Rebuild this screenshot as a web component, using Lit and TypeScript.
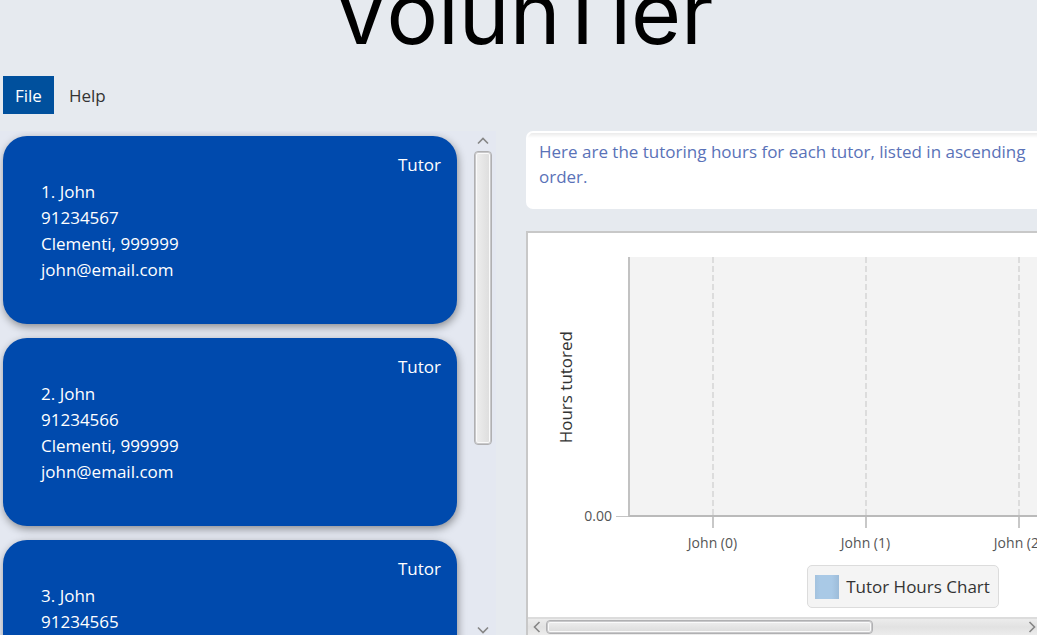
import { LitElement, html, css } from "lit";
import { customElement, property } from "lit/decorators.js";

interface Tutor {
  index: number;
  name: string;
  phone: string;
  address: string;
  email: string;
}

const TUTORS: Tutor[] = [
  { index: 1, name: "John", phone: "91234567", address: "Clementi, 999999", email: "john@email.com" },
  { index: 2, name: "John", phone: "91234566", address: "Clementi, 999999", email: "john@email.com" },
  { index: 3, name: "John", phone: "91234565", address: "Clementi, 999999", email: "john@email.com" },
];

@customElement("tutor-card")
class TutorCard extends LitElement {
  @property({ attribute: false }) tutor!: Tutor;

  static styles = css`
    :host {
      display: block;
      flex: none;
    }
    .card {
      box-sizing: border-box;
      min-height: 188px;
      padding: 16px 16px 40px 38px;
      border-radius: 24px;
      background: #004aad;
      color: #fff;
      line-height: 26px;
      box-shadow: 1px 3px 8px rgba(0, 0, 0, 0.4);
      display: flex;
      flex-direction: column;
      gap: 1px;
    }
    .role {
      align-self: flex-end;
    }
    .details {
      margin: 0;
      padding: 0;
      list-style: none;
    }
  `;

  render() {
    const t = this.tutor;
    return html`<article class="card">
      <span class="role">Tutor</span>
      <ul class="details">
        <li>${t.index}. ${t.name}</li>
        <li>${t.phone}</li>
        <li>${t.address}</li>
        <li>${t.email}</li>
      </ul>
    </article>`;
  }
}

@customElement("hours-chart")
class HoursChart extends LitElement {
  @property({ attribute: false }) labels: string[] = [];

  static styles = css`
    :host {
      display: flex;
      min-width: 750px;
      box-sizing: border-box;
    }
    .chart {
      flex: 1;
      display: flex;
      flex-direction: column;
      padding: 24px 26px 9px 26px;
    }
    .area {
      flex: 1;
      display: grid;
      grid-template-columns: 24px 50px 1fr;
      grid-template-rows: 1fr 48px;
    }
    .y-title {
      writing-mode: vertical-rl;
      transform: rotate(180deg);
      place-self: center;
      line-height: 24px;
      color: #333;
    }
    .y-axis {
      display: flex;
      align-items: flex-end;
      justify-content: flex-end;
      gap: 4px;
      font-size: 14px;
      line-height: 20px;
      color: #555;
    }
    .y-value {
      margin-bottom: -9px;
    }
    .y-tick {
      width: 12px;
      height: 1px;
      background: #c4c4c4;
    }
    .plot {
      background: #f3f3f3;
      border-left: 2px solid #c2c2c2;
      border-bottom: 2px solid #bababa;
      padding-left: 6px;
      display: flex;
    }
    .column {
      width: 153px;
      display: flex;
      justify-content: center;
    }
    .grid-line {
      width: 2px;
      background: repeating-linear-gradient(to bottom, #dcdcdc 0 6px, transparent 6px 9px);
    }
    .x-axis {
      grid-column: 3;
      padding-left: 8px;
      display: flex;
    }
    .category {
      width: 153px;
      display: flex;
      flex-direction: column;
      align-items: center;
      font-size: 14px;
      line-height: 20px;
      color: #555;
      gap: 5px;
    }
    .x-tick {
      width: 2px;
      height: 11px;
      background: #c8c8c8;
    }
    .legend {
      align-self: center;
      display: flex;
      align-items: center;
      gap: 7px;
      box-sizing: border-box;
      height: 43px;
      padding: 0 8px 0 7px;
      border: 1px solid #dcdcdc;
      border-radius: 5px;
      background: #f4f4f4;
      color: #333;
    }
    .swatch {
      width: 24px;
      height: 24px;
      background: linear-gradient(to right, #a3c2de, #a9c9e6 20%, #a9c9e6 70%, #9dbcd9);
    }
  `;

  render() {
    return html`<div class="chart">
      <div class="area">
        <span class="y-title">Hours tutored</span>
        <div class="y-axis"><span class="y-value">0.00</span><span class="y-tick"></span></div>
        <div class="plot">
          ${this.labels.map(() => html`<div class="column"><span class="grid-line"></span></div>`)}
        </div>
        <div class="x-axis">
          ${this.labels.map((l) => html`<div class="category"><span class="x-tick"></span><span>${l}</span></div>`)}
        </div>
      </div>
      <div class="legend"><span class="swatch"></span><span>Tutor Hours Chart</span></div>
    </div>`;
  }
}

@customElement("app-root")
class AppRoot extends LitElement {
  static styles = css`
    :host {
      display: flex;
      flex-direction: column;
      height: 100vh;
      overflow: hidden;
      background: #e6eaef;
      font-family: "Open Sans", "Noto Sans", sans-serif;
      font-size: 17px;
      font-weight: 400;
    }
    .header {
      height: 76px;
      display: flex;
      justify-content: center;
      align-items: flex-end;
    }
    .title {
      margin: 0;
      padding-left: 8px;
      font-family: Inter, sans-serif;
      font-size: 86px;
      font-weight: 400;
      line-height: 126px;
      color: #000;
    }
    .menu {
      display: flex;
      gap: 3px;
      padding: 0 3px;
    }
    .menu-item {
      height: 38px;
      padding: 0 12px;
      border: 0;
      background: none;
      font: inherit;
      color: #333;
    }
    .menu-item.active {
      background: #00509d;
      color: #fff;
    }
    .main {
      flex: 1;
      min-height: 0;
      display: grid;
      grid-template-columns: 496fr 511fr;
      gap: 30px;
      padding-top: 17px;
    }
    .people {
      display: flex;
      min-height: 0;
      overflow: hidden;
      background: #e4e8f1;
    }
    .list {
      flex: 1;
      min-width: 0;
      display: flex;
      flex-direction: column;
      gap: 14px;
      padding: 5px 17px 0 3px;
    }
    .scroll {
      border: 0;
      padding: 0;
      background: none;
      display: flex;
      align-items: center;
      justify-content: center;
    }
    .arrow {
      fill: none;
      stroke: #868686;
      stroke-width: 1.6;
    }
    .bar-y {
      width: 18px;
      margin-right: 4px;
      display: flex;
      flex-direction: column;
    }
    .bar-y .scroll {
      height: 20px;
    }
    .bar-y .scroll:last-child {
      height: 10px;
    }
    .track {
      flex: 1;
      min-width: 0;
      min-height: 0;
    }
    .thumb {
      box-sizing: border-box;
      border: 1px solid #b0b0b2;
      border-radius: 4px;
      box-shadow: inset 0 0 0 1px #c8c8ca, inset 0 0 0 2px #fafafa;
    }
    .thumb-y {
      height: 62%;
      background: linear-gradient(to right, #efefef, #dcdcdc);
    }
    .thumb-x {
      width: 68%;
      height: 14px;
      background: linear-gradient(to bottom, #efefef, #dadada);
    }
    .side {
      min-width: 0;
      min-height: 0;
      display: flex;
      flex-direction: column;
      gap: 22px;
    }
    .result {
      box-sizing: border-box;
      height: 78px;
      padding: 6px 8px 0 11px;
      border: 2px solid #fff;
      border-right: 0;
      border-radius: 7px 0 0 7px;
      background: linear-gradient(to bottom, #ebebeb, #fff 5px);
      font: inherit;
      line-height: 25px;
      color: #5a72b8;
      resize: none;
      outline: 0;
      overflow: hidden;
    }
    .panel {
      flex: 1;
      min-height: 0;
      display: flex;
      flex-direction: column;
      border: 2px solid #c8c8c8;
      border-width: 2px 0 0 2px;
      background: #fff;
    }
    .view {
      flex: 1;
      min-height: 0;
      display: flex;
      overflow: hidden;
    }
    .view hours-chart {
      flex: 1 0 auto;
    }
    .bar-x {
      height: 18px;
      box-sizing: border-box;
      border-top: 2px solid #dcdcdc;
      background: linear-gradient(to bottom, #ececec, #e2e2e2 50%, #ececec);
      display: flex;
      align-items: center;
    }
    .bar-x .scroll {
      width: 18px;
    }
    .bar-x .scroll:last-child {
      width: 10px;
    }
  `;

  render() {
    return html`
      <header class="header"><h1 class="title">VolunTier</h1></header>
      <nav class="menu">
        <button class="menu-item active">File</button>
        <button class="menu-item">Help</button>
      </nav>
      <main class="main">
        <section class="people">
          <div class="list">${TUTORS.map((t) => html`<tutor-card .tutor=${t}></tutor-card>`)}</div>
          <div class="bar-y">
            <button class="scroll" aria-label="Scroll up">
              <svg class="arrow" width="12" height="8" viewBox="0 0 12 8"><path d="M1 6.500 6 1.500 11 6.500" /></svg>
            </button>
            <div class="track"><div class="thumb thumb-y"></div></div>
            <button class="scroll" aria-label="Scroll down">
              <svg class="arrow" width="12" height="8" viewBox="0 0 12 8"><path d="M1 1.500 6 6.500 11 1.500" /></svg>
            </button>
          </div>
        </section>
        <section class="side">
          <textarea class="result" readonly aria-label="Result">
Here are the tutoring hours for each tutor, listed in ascending order.</textarea
          >
          <div class="panel">
            <div class="view">
              <hours-chart .labels=${["John (0)", "John (1)", "John (2)"]}></hours-chart>
            </div>
            <div class="bar-x">
              <button class="scroll" aria-label="Scroll left">
                <svg class="arrow" width="8" height="12" viewBox="0 0 8 12"><path d="M6.500 1 1.500 6 6.500 11" /></svg>
              </button>
              <div class="track"><div class="thumb thumb-x"></div></div>
              <button class="scroll" aria-label="Scroll right">
                <svg class="arrow" width="8" height="12" viewBox="0 0 8 12"><path d="M1.500 1 6.500 6 1.500 11" /></svg>
              </button>
            </div>
          </div>
        </section>
      </main>
    `;
  }
}
